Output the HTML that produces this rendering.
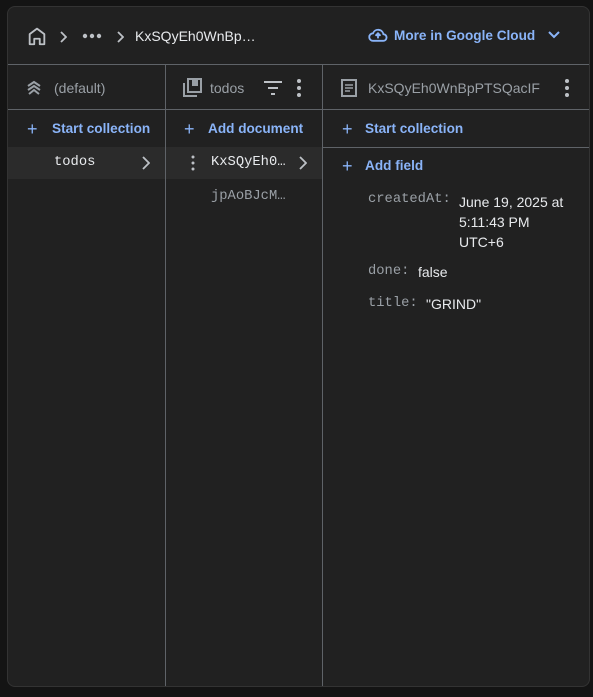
<!DOCTYPE html>
<html><head><style>
*{box-sizing:border-box;margin:0;padding:0}
body{width:593px;height:697px;background:#141414;font-family:"Liberation Sans",sans-serif;position:relative;overflow:hidden}
.card{position:absolute;left:7px;top:6px;width:583px;height:681px;background:#212121;border:1px solid #333;border-radius:8px;overflow:hidden}
.abs{position:absolute}
.hl{position:absolute;height:1px;background:#5f6368}
.vl{position:absolute;width:1px;background:#5f6368}
.t{position:absolute;white-space:nowrap;font-size:14px}
.blue{color:#8ab4f8}
.b{font-weight:bold;font-size:13.6px}
.grey{color:#bdc1c6}
.mono{font-family:"Liberation Mono",monospace;font-size:13.8px}
</style></head><body>
<div class="card">
 <svg class="abs" style="left:18px;top:18px" width="22" height="22" viewBox="0 0 24 24"><path d="M4 21V10l8-6 8 6v11h-5v-6H9v6z" fill="none" stroke="#bdc1c6" stroke-width="2" stroke-linejoin="round"/></svg>
 <svg class="abs" style="left:51px;top:24px" width="8" height="12" viewBox="0 0 8 12"><path d="M2 1l5 5-5 5" fill="none" stroke="#bdc1c6" stroke-width="1.8"/></svg>
 <svg class="abs" style="left:74px;top:26px" width="20" height="6" viewBox="0 0 20 6"><circle cx="3" cy="3" r="2.2" fill="#bdc1c6"/><circle cx="10" cy="3" r="2.2" fill="#bdc1c6"/><circle cx="17" cy="3" r="2.2" fill="#bdc1c6"/></svg>
 <svg class="abs" style="left:108px;top:24px" width="8" height="12" viewBox="0 0 8 12"><path d="M2 1l5 5-5 5" fill="none" stroke="#bdc1c6" stroke-width="1.8"/></svg>
 <div class="t" style="left:127px;top:21px;color:#e8eaed">KxSQyEh0WnBp…</div>
 <svg class="abs" style="left:360px;top:20px" width="20" height="16" viewBox="0 0 24 18"><path d="M6 16h12a4 4 0 0 0 .5-8A6.5 6.5 0 0 0 6 7 4.5 4.5 0 0 0 6 16z M9 10l3-3 3 3 M12 7v6" fill="none" stroke="#8ab4f8" stroke-width="2.2"/></svg>
 <div class="t blue b" style="left:386px;top:21px">More in Google Cloud</div>
 <svg class="abs" style="left:539px;top:23px" width="14" height="10" viewBox="0 0 14 10"><path d="M2 2l5 5 5-5" fill="none" stroke="#8ab4f8" stroke-width="2"/></svg>
 <div class="hl" style="left:0;top:57px;width:583px"></div>
 <div class="hl" style="left:0;top:102px;width:583px"></div>
 <div class="vl" style="left:157px;top:57px;height:630px"></div>
 <div class="vl" style="left:314px;top:57px;height:630px"></div>
 <svg class="abs" style="left:17px;top:72px" width="18" height="18" viewBox="0 0 18 18"><path d="M3 7l6-4 6 4M3 11l6-4 6 4M4 15l5-4 5 4" fill="none" stroke="#9aa0a6" stroke-width="2"/></svg>
 <div class="t" style="left:46px;top:73px;color:#9aa0a6">(default)</div>
 <div class="t blue" style="left:19px;top:112px;font-size:18px">+</div>
 <div class="t blue b" style="left:44px;top:114px">Start collection</div>
 <div class="abs" style="left:0;top:140px;width:157px;height:32px;background:#2b2b2b"></div>
 <div class="t mono" style="left:46px;top:148px;color:#e8eaed">todos</div>
 <svg class="abs" style="left:133px;top:149px" width="9" height="14" viewBox="0 0 9 14"><path d="M2 1l6 6-6 6" fill="none" stroke="#bdc1c6" stroke-width="1.8"/></svg>
 <svg class="abs" style="left:175px;top:71px" width="19" height="19" viewBox="0 0 19 19"><rect x="5" y="1" width="13" height="13" fill="none" stroke="#9aa0a6" stroke-width="2"/><path d="M1 5v13h13" fill="none" stroke="#9aa0a6" stroke-width="2"/><rect x="9" y="2" width="6" height="6" fill="#9aa0a6"/></svg>
 <div class="t" style="left:202px;top:73px;color:#9aa0a6">todos</div>
 <svg class="abs" style="left:255px;top:73px" width="20" height="16" viewBox="0 0 20 16"><path d="M1 2h18M5 8h10M8 14h4" stroke="#bdc1c6" stroke-width="2"/></svg>
 <svg class="abs" style="left:286px;top:71px" width="10" height="20" viewBox="0 0 10 20"><circle cx="5" cy="3" r="2" fill="#bdc1c6"/><circle cx="5" cy="10" r="2" fill="#bdc1c6"/><circle cx="5" cy="17" r="2" fill="#bdc1c6"/></svg>
 <div class="t blue" style="left:176px;top:112px;font-size:18px">+</div>
 <div class="t blue b" style="left:200px;top:114px">Add document</div>
 <div class="abs" style="left:158px;top:140px;width:156px;height:32px;background:#2b2b2b"></div>
 <svg class="abs" style="left:182px;top:148px" width="6" height="16" viewBox="0 0 6 16"><circle cx="3" cy="2" r="1.5" fill="#bdc1c6"/><circle cx="3" cy="8" r="1.5" fill="#bdc1c6"/><circle cx="3" cy="14" r="1.5" fill="#bdc1c6"/></svg>
 <div class="t mono" style="left:203px;top:148px;color:#e8eaed">KxSQyEh0…</div>
 <svg class="abs" style="left:290px;top:149px" width="9" height="14" viewBox="0 0 9 14"><path d="M2 1l6 6-6 6" fill="none" stroke="#bdc1c6" stroke-width="1.8"/></svg>
 <div class="t mono" style="left:203px;top:182px;color:#9aa0a6">jpAoBJcM…</div>
 <svg class="abs" style="left:333px;top:72px" width="16" height="18" viewBox="0 0 16 18"><rect x="1" y="1" width="14" height="16" fill="none" stroke="#9aa0a6" stroke-width="2"/><path d="M4 6h8M4 9h8M4 12h5" stroke="#9aa0a6" stroke-width="1.6"/></svg>
 <div class="t" style="left:360px;top:73px;color:#9aa0a6">KxSQyEh0WnBpPTSQacIF</div>
 <svg class="abs" style="left:554px;top:71px" width="10" height="20" viewBox="0 0 10 20"><circle cx="5" cy="3" r="2" fill="#bdc1c6"/><circle cx="5" cy="10" r="2" fill="#bdc1c6"/><circle cx="5" cy="17" r="2" fill="#bdc1c6"/></svg>
 <div class="t blue" style="left:334px;top:112px;font-size:18px">+</div>
 <div class="t blue b" style="left:357px;top:114px">Start collection</div>
 <div class="hl" style="left:315px;top:140px;width:268px"></div>
 <div class="t blue" style="left:334px;top:149px;font-size:18px">+</div>
 <div class="t blue b" style="left:357px;top:151px">Add field</div>
 <div class="t mono" style="left:360px;top:185px;color:#9aa0a6">createdAt:</div>
 <div class="t" style="left:451px;top:185px;color:#e8eaed;line-height:20px;white-space:normal;width:120px">June 19, 2025 at<br>5:11:43 PM<br>UTC+6</div>
 <div class="t mono" style="left:360px;top:257px;color:#9aa0a6">done:</div>
 <div class="t" style="left:410px;top:257px;color:#e8eaed">false</div>
 <div class="t mono" style="left:360px;top:289px;color:#9aa0a6">title:</div>
 <div class="t" style="left:418px;top:289px;color:#e8eaed">"GRIND"</div>
</div>
</body></html>
